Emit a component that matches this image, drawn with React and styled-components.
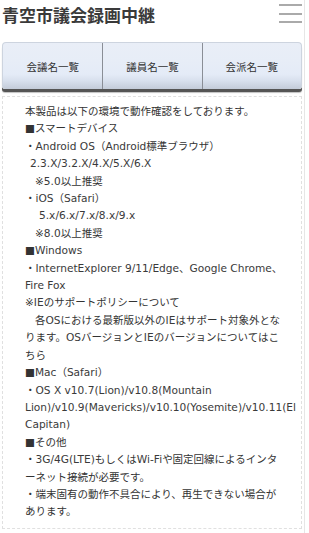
import React from "react";
import styled, { createGlobalStyle } from "styled-components";

const Global = createGlobalStyle`
  html, body { margin: 0; padding: 0; background: #fff; }
  body { font-family: "DejaVu Sans", "Noto Sans CJK JP", sans-serif; color: #333; }
`;

const Page = styled.div`
  width: 305px;
  min-height: 533px;
  box-sizing: border-box;
  border-right: 1px solid #e6e6e6;
  padding: 0 2px 0 2px;
`;

const Header = styled.header`
  display: flex;
  align-items: flex-start;
  justify-content: space-between;
  height: 42px;
`;

const Title = styled.h1`
  margin: 3px 0 0 0;
  font-family: "Noto Sans CJK JP", sans-serif;
  font-size: 17px;
  line-height: 24px;
  font-weight: 700;
  color: #3a3a3a;
`;

const Burger = styled.button`
  margin: 4px 0 0 0;
  padding: 0;
  border: 0;
  background: none;
  width: 23px;
  display: flex;
  flex-direction: column;
  gap: 6.5px;
`;

const BurgerLine = styled.span`
  display: block;
  height: 2px;
  background: #aaa;
`;

const TabBar = styled.nav`
  display: grid;
  grid-template-columns: 1fr 1fr 1fr;
  height: 47px;
  border-radius: 4px 4px 3px 3px;
  background: linear-gradient(#e9eef7 0%, #e7edf7 40%, #e4ebf7 68%, #d8e0ed 82%, #c3cbd8 100%);
  box-shadow: 0 3px 0 #555, 0 4px 1px rgba(0,0,0,0.25);
  border: 1px solid #cdd4df;
  border-bottom: 0;
  box-sizing: border-box;
`;

const Tab = styled.a`
  display: flex;
  align-items: center;
  justify-content: center;
  font-family: "Noto Sans CJK JP", sans-serif;
  font-size: 10.5px;
  color: #333;
  text-decoration: none;
  border-left: ${(p) => (p.$first ? "0" : "1px solid #8a8e96")};
`;

const Content = styled.section`
  margin-top: 7px;
  border: 1px dashed #e0e0e0;
  padding: 6px 0 7px 22px;
  font-size: 10px;
  line-height: 17.4px;
  color: #333;
  overflow: hidden;
`;

const Line = styled.div`
  white-space: nowrap;
  font-size: 10.5px;
  padding-left: ${(p) => p.$indent || 0}px;
`;

const Latin = styled.span`
  font-family: "DejaVu Sans", sans-serif;
  font-size: 10.6px;
  color: #3a3a3a;
`;

const lines = [
  ["本製品は以下の環境で動作確認をしております。", 0],
  ["■スマートデバイス", 0],
  ["・Android OS（Android標準ブラウザ）", 0],
  ["2.3.X/3.2.X/4.X/5.X/6.X", 5],
  ["※5.0以上推奨", 10],
  ["・iOS（Safari）", 0],
  ["5.x/6.x/7.x/8.x/9.x", 14],
  ["※8.0以上推奨", 10],
  ["■Windows", 0],
  ["・InternetExplorer 9/11/Edge、Google Chrome、", 0],
  ["Fire Fox", 0],
  ["※IEのサポートポリシーについて", 0],
  ["各OSにおける最新版以外のIEはサポート対象外とな", 10],
  ["ります。OSバージョンとIEのバージョンについてはこ", 0],
  ["ちら", 0],
  ["■Mac（Safari）", 0],
  ["・OS X v10.7(Lion)/v10.8(Mountain", 0],
  ["Lion)/v10.9(Mavericks)/v10.10(Yosemite)/v10.11(El", 0],
  ["Capitan)", 0],
  ["■その他", 0],
  ["・3G/4G(LTE)もしくはWi-Fiや固定回線によるインタ", 0],
  ["ーネット接続が必要です。", 0],
  ["・端末固有の動作不具合により、再生できない場合が", 0],
  ["あります。", 0],
];

const split = (t) =>
  t.split(/([A-Za-z0-9.\/()\- ]+)/).map((s, i) =>
    i % 2 === 1 ? <Latin key={i}>{s}</Latin> : s
  );

export default function App() {
  return (
    <>
      <Global />
      <Page>
        <Header>
          <Title>青空市議会録画中継</Title>
          <Burger aria-label="menu">
            <BurgerLine />
            <BurgerLine />
            <BurgerLine />
          </Burger>
        </Header>
        <TabBar>
          <Tab $first href="#">会議名一覧</Tab>
          <Tab href="#">議員名一覧</Tab>
          <Tab href="#">会派名一覧</Tab>
        </TabBar>
        <Content>
          {lines.map(([t, i], k) => (
            <Line key={k} $indent={i}>{split(t)}</Line>
          ))}
        </Content>
      </Page>
    </>
  );
}
